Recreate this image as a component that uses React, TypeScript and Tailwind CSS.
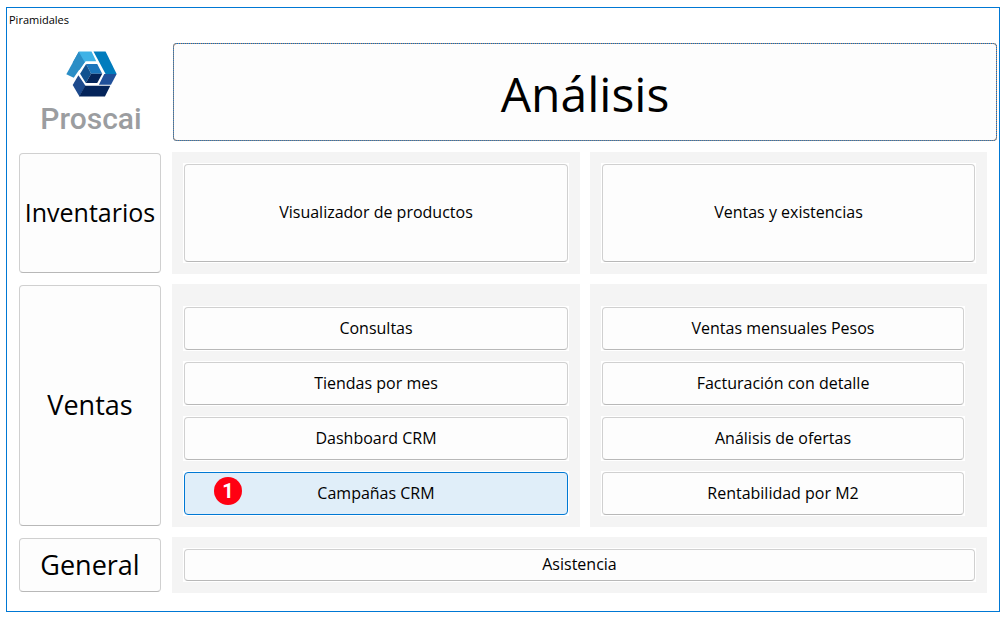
import clsx from 'clsx';

const inventarios = ['Visualizador de productos', 'Ventas y existencias'];
const consultas = [
  { label: 'Consultas' },
  { label: 'Tiendas por mes' },
  { label: 'Dashboard CRM' },
  { label: 'Campañas CRM', active: true, badge: 1 },
];
const reportes = [
  { label: 'Ventas mensuales Pesos' },
  { label: 'Facturación con detalle' },
  { label: 'Análisis de ofertas' },
  { label: 'Rentabilidad por M2' },
];

type TileProps = {
  label: string;
  className?: string;
  active?: boolean;
  badge?: number;
};

function Tile({ label, className, active, badge }: TileProps) {
  return (
    <div className="flex bg-white p-px">
      <button
        type="button"
        className={clsx(
          'relative flex-1 rounded border',
          active ? 'border-[#0078d4] bg-[#e0eef9]' : 'border-[#d0d0d0] border-b-[#b8b8b8] bg-[#fdfdfd]',
          className
        )}
      >
        {badge && (
          <span className="absolute top-1 left-[29px] flex h-7 w-7 items-center justify-center rounded-full bg-[#ff0012] font-['Roboto',sans-serif] text-xl font-bold text-white">
            {badge}
          </span>
        )}
        {label}
      </button>
    </div>
  );
}

function Logo() {
  return (
    <div className="flex w-[168px] shrink-0 flex-col items-center pt-2">
      <svg viewBox="17 16 152 136" className="h-[46px] w-[51px]" aria-hidden="true">
        {/* left arm */}
        <path d="M55 18L18 85l22 10 32-46z" fill="#2b8ec6" />
        <path d="M55 17h38l14 29H76L62 60z" fill="#3fb2e6" />
        <path d="M55 18l18 31-16 23-20-22z" fill="#2b8ec6" />
        {/* right arm */}
        <path d="M99 17h36l33 67h-33z" fill="#007cbd" />
        <path d="M131 84h37l-17 32h-36z" fill="#20509a" />
        {/* bottom arm */}
        <path d="M54 88l21 31-18 32-20-34z" fill="#1d4a8d" />
        <path d="M74 119h75l-16 32H56z" fill="#04245a" />
        {/* cube */}
        <path d="M77 54h33l15 29H92z" fill="#1b75bc" />
        <path d="M77 54l15 29-16 28-17-28z" fill="#11518f" />
        <path d="M92 83h33l-15 28H76z" fill="#04245a" />
      </svg>
      <span className="mt-1 font-['Roboto',sans-serif] text-3xl font-medium text-[#9b9da0]">Proscai</span>
    </div>
  );
}

export default function App() {
  return (
    <div className="min-h-screen bg-white px-1.5 pt-[7px] pb-[5px] font-['Open_Sans',sans-serif] text-base text-black">
      <main className="border border-[#0078d4] pb-[18px]">
        <h1 className="px-0.5 pt-1 text-[11px] leading-4">Piramidales</h1>

        <header className="mt-[15px] mr-0.5 flex">
          <Logo />
          <div className="-ml-0.5 flex flex-1 rounded bg-[#c08a60]">
            <button
              type="button"
              className="h-[98px] flex-1 rounded border border-dotted border-[#0070d0] bg-[#fdfdfd] bg-clip-padding pt-1 text-5xl"
            >
              Análisis
            </button>
          </div>
        </header>

        <div className="mt-[11px] mr-3 ml-[11px] grid grid-cols-[144px_408fr_397fr] gap-2.5">
          <Tile label="Inventarios" className="text-[25px]" />
          {inventarios.map((label) => (
            <section key={label} className="bg-[#f4f4f4] p-[11px]">
              <Tile label={label} className="h-[98px] pb-0.5" />
            </section>
          ))}

          <Tile label="Ventas" className="text-[27px]" />
          <section className="flex flex-col gap-2.5 bg-[#f4f4f4] px-[11px] pt-[22px] pb-[11px]">
            {consultas.map((item) => (
              <Tile key={item.label} {...item} className="h-[43px] pb-0.5" />
            ))}
          </section>
          <section className="flex flex-col gap-2.5 bg-[#f4f4f4] pt-[22px] pr-[22px] pb-[11px] pl-[11px]">
            {reportes.map((item) => (
              <Tile key={item.label} {...item} className="h-[43px] pb-0.5" />
            ))}
          </section>

          <Tile label="General" className="text-[27px]" />
          <section className="col-span-2 bg-[#f4f4f4] p-[11px]">
            <Tile label="Asistencia" className="h-8 pb-0.5" />
          </section>
        </div>
      </main>
    </div>
  );
}
